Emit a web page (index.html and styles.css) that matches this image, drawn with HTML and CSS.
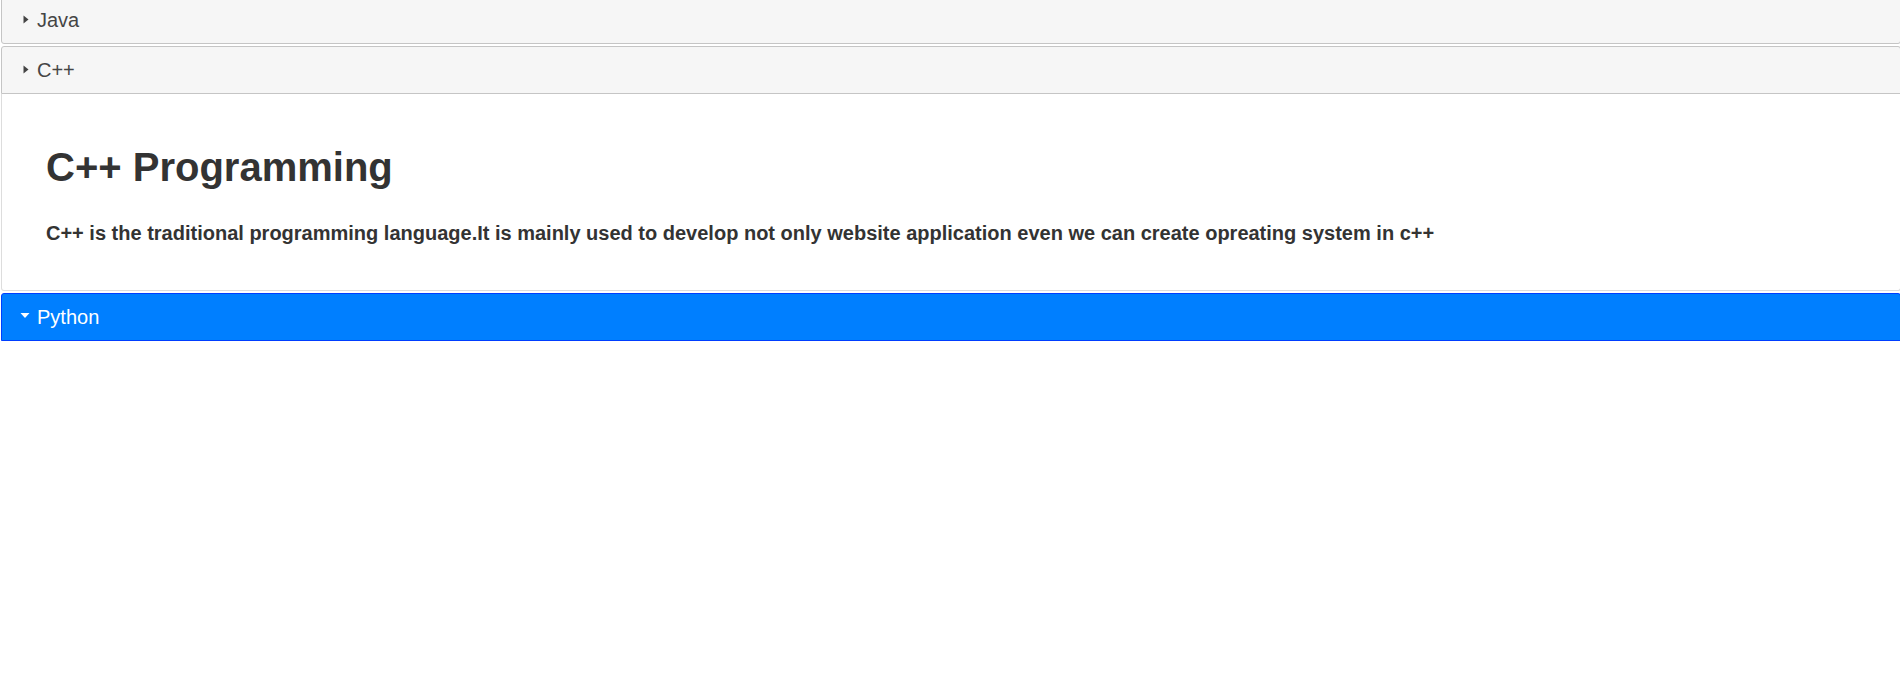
FILE: index.html
```html
<!DOCTYPE html>
<html lang="en">
<head>
<meta charset="utf-8">
<title>Accordion</title>
<link rel="stylesheet" href="styles.css">
</head>
<body>
<div class="accordion">
  <h3 class="header collapsed">
    <svg class="icon" width="20" height="20" viewBox="0 0 20 20"><polygon points="7.5,5.5 12.5,9.5 7.5,13.5" fill="#444"/></svg>
    <span>Java</span>
  </h3>
  <h3 class="header top-only">
    <svg class="icon" width="20" height="20" viewBox="0 0 20 20"><polygon points="7.5,5.5 12.5,9.5 7.5,13.5" fill="#444"/></svg>
    <span>C++</span>
  </h3>
  <div class="panel">
    <h1 class="title">C++ Programming</h1>
    <p class="text">C++ is the traditional programming language.It is mainly used to develop not only website application even we can create opreating system in c++</p>
  </div>
  <h3 class="header active">
    <svg class="icon" width="20" height="20" viewBox="0 0 20 20"><polygon points="4.5,6 13.5,6 9,11" fill="#fff"/></svg>
    <span>Python</span>
  </h3>
</div>
</body>
</html>
```
FILE: styles.css
```css
html, body {
  margin: 0;
  padding: 0;
  overflow: hidden;
  background: #ffffff;
}
body {
  font-family: "Liberation Sans", Arial, sans-serif;
}
.accordion {
  width: 1900px;
  margin: -6px 0 0 1px;
}
.header {
  display: flex;
  align-items: center;
  margin: 2px 0 0 0;
  padding: 10px 10px 10px 14px;
  font-size: 20px;
  font-weight: normal;
  line-height: 26px;
  border: 1px solid #c5c5c5;
  background: #f6f6f6;
  color: #454545;
  border-radius: 3px;
}
.header.top-only {
  border-radius: 3px 3px 0 0;
}
.header.active {
  background: #007fff;
  border-color: #003eff;
  color: #ffffff;
  border-radius: 3px 3px 0 0;
}
.icon {
  display: block;
  flex: 0 0 20px;
  margin-right: 1px;
}
.panel {
  border: 1px solid #dddddd;
  border-top: 0;
  border-radius: 0 0 3px 3px;
  background: #ffffff;
  color: #333333;
  padding: 20px 44px;
}
.title {
  font-size: 40px;
  font-weight: bold;
  line-height: 46px;
  margin: 30px 0 32px;
}
.text {
  font-size: 20px;
  font-weight: bold;
  line-height: 23px;
  margin: 0 0 25px;
}
```
